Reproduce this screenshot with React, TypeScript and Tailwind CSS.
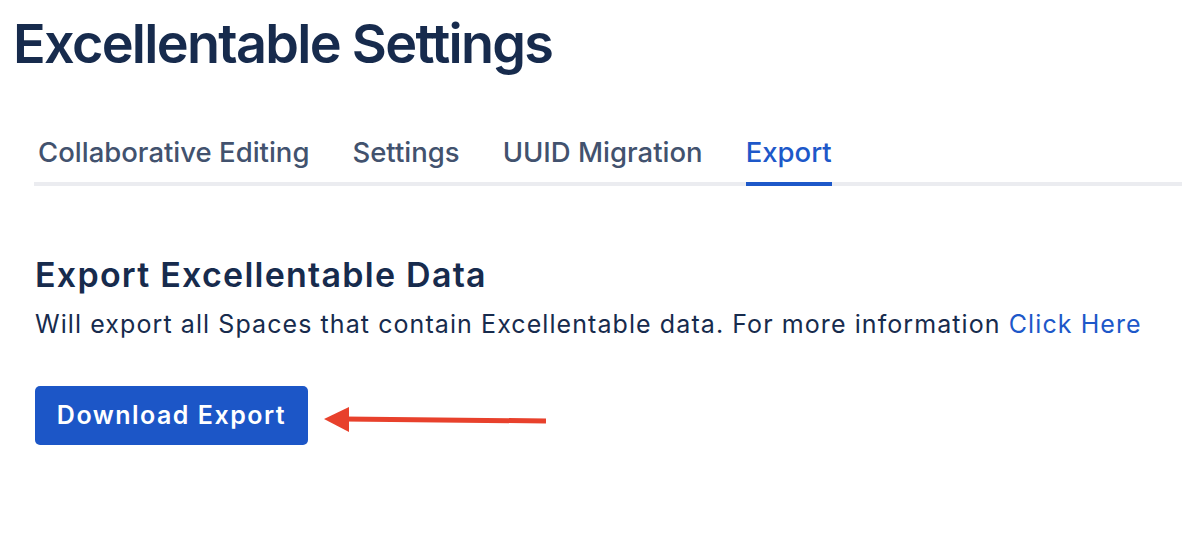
import React from "react";

const tabs = ["Collaborative Editing", "Settings", "UUID Migration", "Export"];

export default function App() {
  return (
    <div
      className="min-h-screen w-full bg-white text-[#172b4d]"
      style={{ fontFamily: "Inter, 'Noto Sans', sans-serif" }}
    >
      <h1 className="pl-[13px] pt-[12px] text-[54px] font-semibold leading-[64px] tracking-[-1.7px]">
        Excellentable Settings
      </h1>

      <div className="ml-[34px] mt-[58px] flex gap-[43px] border-b-4 border-[#ebecf0] pl-[4px]">
        {tabs.map((t) => {
          const active = t === "Export";
          return (
            <div
              key={t}
              className={`-mb-[4px] border-b-4 pb-[12px] text-[27.5px] font-medium leading-[36px] ${
                active ? "border-[#1d58c9] text-[#1d58c9]" : "border-transparent text-[#42526e]"
              }`}
            >
              {t}
            </div>
          );
        })}
      </div>

      <div className="pl-[35px] pt-[67px]">
        <h2 className="text-[34px] font-semibold leading-[44px] tracking-[1.25px]">
          Export Excellentable Data
        </h2>
        <p className="mt-[10px] text-[25px] leading-[34px] tracking-[1.08px]">
          Will export all Spaces that contain Excellentable data. For more information{" "}
          <a className="text-[#1d58c9]">Click Here</a>
        </p>

        <div className="mt-[45px] flex items-start">
          <button className="h-[59px] w-[273px] rounded-[5px] bg-[#1c56c7] text-[25px] font-semibold tracking-[1.5px] text-white">
            Download Export
          </button>
          <svg width="224" height="34" viewBox="0 0 224 34" className="ml-[16px] mt-[15px]">
            <line x1="20" y1="18" x2="222" y2="20" stroke="#e8412c" strokeWidth="5" />
            <polygon points="0,18 25,6 25,31" fill="#e8412c" />
          </svg>
        </div>
      </div>
    </div>
  );
}
